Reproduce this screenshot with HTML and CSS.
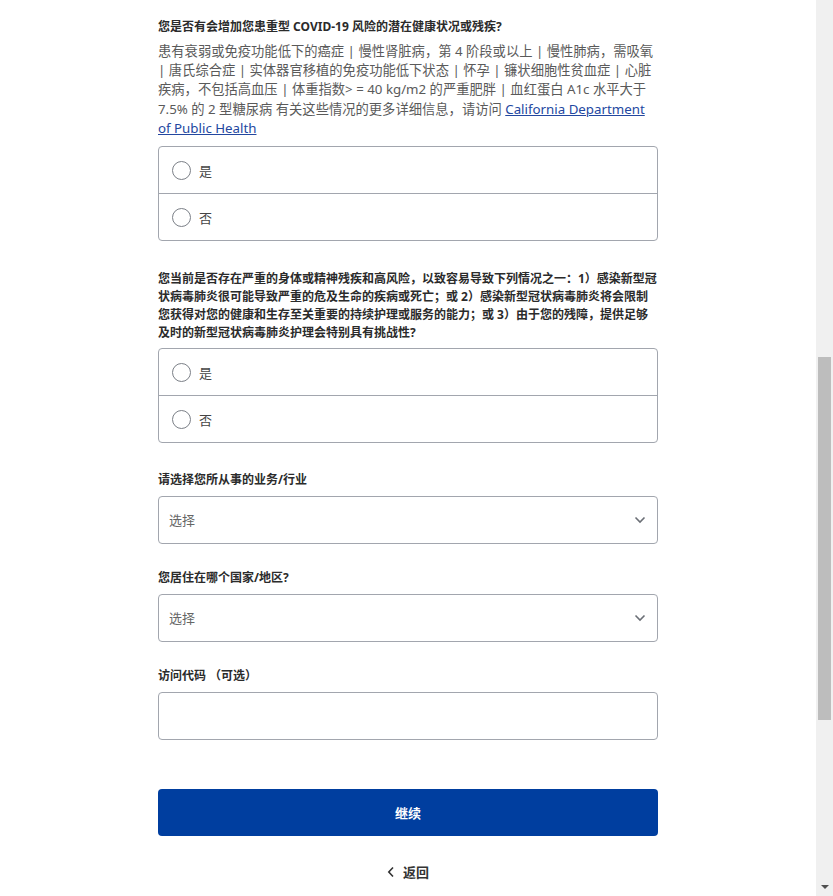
FILE: index.html
```html
<!DOCTYPE html>
<html lang="zh-CN">
<head>
    <meta charset="UTF-8">
    <meta name="viewport" content="width=device-width, initial-scale=1.0">
    <title>资格筛查</title>
    <link rel="stylesheet" href="styles.css">
</head>
<body>
    <main class="page">
        <form class="screening-form">
            <div class="question">
                <div class="question-title">您是否有会增加您患重型 COVID-19 风险的潜在健康状况或残疾?</div>
                <p class="question-help">患有衰弱或免疫功能低下的癌症 | 慢性肾脏病，第 4 阶段或以上 | 慢性肺病，需吸氧 | 唐氏综合症 | 实体器官移植的免疫功能低下状态 | 怀孕 | 镰状细胞性贫血症 | 心脏疾病，不包括高血压 | 体重指数> = 40 kg/m2 的严重肥胖 | 血红蛋白 A1c 水平大于 7.5% 的 2 型糖尿病 有关这些情况的更多详细信息，请访问 <a href="#" class="help-link">California Department of Public Health</a></p>
                <div class="choice-group">
                    <label class="choice"><input type="radio" name="condition" value="yes"><span>是</span></label>
                    <label class="choice"><input type="radio" name="condition" value="no"><span>否</span></label>
                </div>
            </div>

            <div class="question question-second">
                <div class="question-title">您当前是否存在严重的身体或精神残疾和高风险，以致容易导致下列情况之一：1）感染新型冠状病毒肺炎很可能导致严重的危及生命的疾病或死亡；或 2）感染新型冠状病毒肺炎将会限制您获得对您的健康和生存至关重要的持续护理或服务的能力；或 3）由于您的残障，提供足够及时的新型冠状病毒肺炎护理会特别具有挑战性?</div>
                <div class="choice-group">
                    <label class="choice"><input type="radio" name="disability" value="yes"><span>是</span></label>
                    <label class="choice"><input type="radio" name="disability" value="no"><span>否</span></label>
                </div>
            </div>

            <div class="field field-first">
                <label class="field-label" for="industry">请选择您所从事的业务/行业</label>
                <div class="select-wrap">
                    <select id="industry" class="select">
                        <option>选择</option>
                    </select>
                    <svg class="select-arrow" width="12" height="8" viewBox="0 0 12 8"><path d="M1.5 1.5 6 6l4.5-4.5" fill="none" stroke="#6b6f76" stroke-width="1.6"/></svg>
                </div>
            </div>

            <div class="field">
                <label class="field-label" for="county">您居住在哪个国家/地区?</label>
                <div class="select-wrap">
                    <select id="county" class="select">
                        <option>选择</option>
                    </select>
                    <svg class="select-arrow" width="12" height="8" viewBox="0 0 12 8"><path d="M1.5 1.5 6 6l4.5-4.5" fill="none" stroke="#6b6f76" stroke-width="1.6"/></svg>
                </div>
            </div>

            <div class="field">
                <label class="field-label" for="access-code">访问代码 （可选）</label>
                <input id="access-code" class="text-input" type="text">
            </div>

            <button type="submit" class="submit-button">继续</button>

            <a href="#" class="back-link">
                <svg width="8" height="12" viewBox="0 0 8 12"><path d="M6 1.5 1.8 6 6 10.5" fill="none" stroke="#333" stroke-width="1.6"/></svg>
                <span>返回</span>
            </a>
        </form>
    </main>

    <!-- window scrollbar, as it shows in the capture -->
    <div class="scrollbar" aria-hidden="true">
        <div class="scrollbar-thumb"></div>
        <div class="scrollbar-arrow"></div>
    </div>
</body>
</html>
```

FILE: styles.css
```css
:root {
    --text-color: #333;
    --muted-color: #5a5a5a;
    --border-color: #a2a6ae;
    --primary-color: #003e9f;
    --link-color: #23479f;
}

body {
    margin: 0;
    padding-right: 17px;
    font-family: "Noto Sans", "Noto Sans CJK SC", sans-serif;
    color: var(--text-color);
    background-color: #fff;
}

.page {
    max-width: 500px;
    margin: 0 auto;
    padding: 18px 0 24px;
}

.screening-form {
    display: flex;
    flex-direction: column;
}

.question-title {
    font-size: 12px;
    line-height: 18px;
    font-weight: 700;
    color: #2b2b2b;
}

.question-help {
    margin: 6px 0 8px;
    font-size: 13.3px;
    line-height: 19.2px;
    color: var(--muted-color);
}

.help-link {
    color: var(--link-color);
}

.question-second {
    margin-top: 29px;
}

.question-second .question-title {
    margin-bottom: 6px;
}

.choice-group {
    display: flex;
    flex-direction: column;
    border: 1px solid var(--border-color);
    border-radius: 4px;
}

.choice {
    display: flex;
    align-items: center;
    gap: 8px;
    height: 46px;
    padding: 0 13px;
    font-size: 13px;
    color: #444;
    cursor: pointer;
}

.choice + .choice {
    border-top: 1px solid var(--border-color);
}

.choice input {
    appearance: none;
    width: 19px;
    height: 19px;
    margin: 0;
    border: 1.5px solid #7b7f87;
    border-radius: 50%;
    background: #fff;
}

.choice input:checked {
    border: 6px solid var(--primary-color);
}

.field {
    display: flex;
    flex-direction: column;
    margin-top: 25px;
}

.field-first {
    margin-top: 28px;
}

.field-label {
    margin-bottom: 7px;
    font-size: 12px;
    line-height: 18px;
    font-weight: 700;
    color: #2b2b2b;
}

.select-wrap {
    position: relative;
}

.select,
.text-input {
    box-sizing: border-box;
    width: 100%;
    height: 48px;
    margin: 0;
    padding: 0 10px;
    border: 1px solid var(--border-color);
    border-radius: 4px;
    background: #fff;
    font-family: inherit;
    font-size: 13px;
    color: #666;
}

.select {
    appearance: none;
}

.select-arrow {
    position: absolute;
    right: 12px;
    top: 20px;
    pointer-events: none;
}

.submit-button {
    height: 47px;
    margin-top: 49px;
    border: none;
    border-radius: 4px;
    background-color: var(--primary-color);
    color: #fff;
    font-family: inherit;
    font-size: 13px;
    font-weight: 700;
    cursor: pointer;
}

.back-link {
    display: flex;
    align-items: center;
    justify-content: center;
    gap: 8px;
    margin-top: 27px;
    font-size: 13px;
    line-height: 18px;
    font-weight: 700;
    color: var(--text-color);
    text-decoration: none;
}

.scrollbar {
    position: fixed;
    top: 0;
    right: 0;
    width: 17px;
    height: 100vh;
    background-color: #f0f0f0;
}

.scrollbar-thumb {
    position: absolute;
    top: 357px;
    left: 2px;
    width: 13px;
    height: 363px;
    background-color: #bdbdbd;
}

.scrollbar-arrow {
    position: absolute;
    bottom: 7px;
    left: 5px;
    width: 0;
    height: 0;
    border-left: 4px solid transparent;
    border-right: 4px solid transparent;
    border-top: 4px solid #505050;
}
```
